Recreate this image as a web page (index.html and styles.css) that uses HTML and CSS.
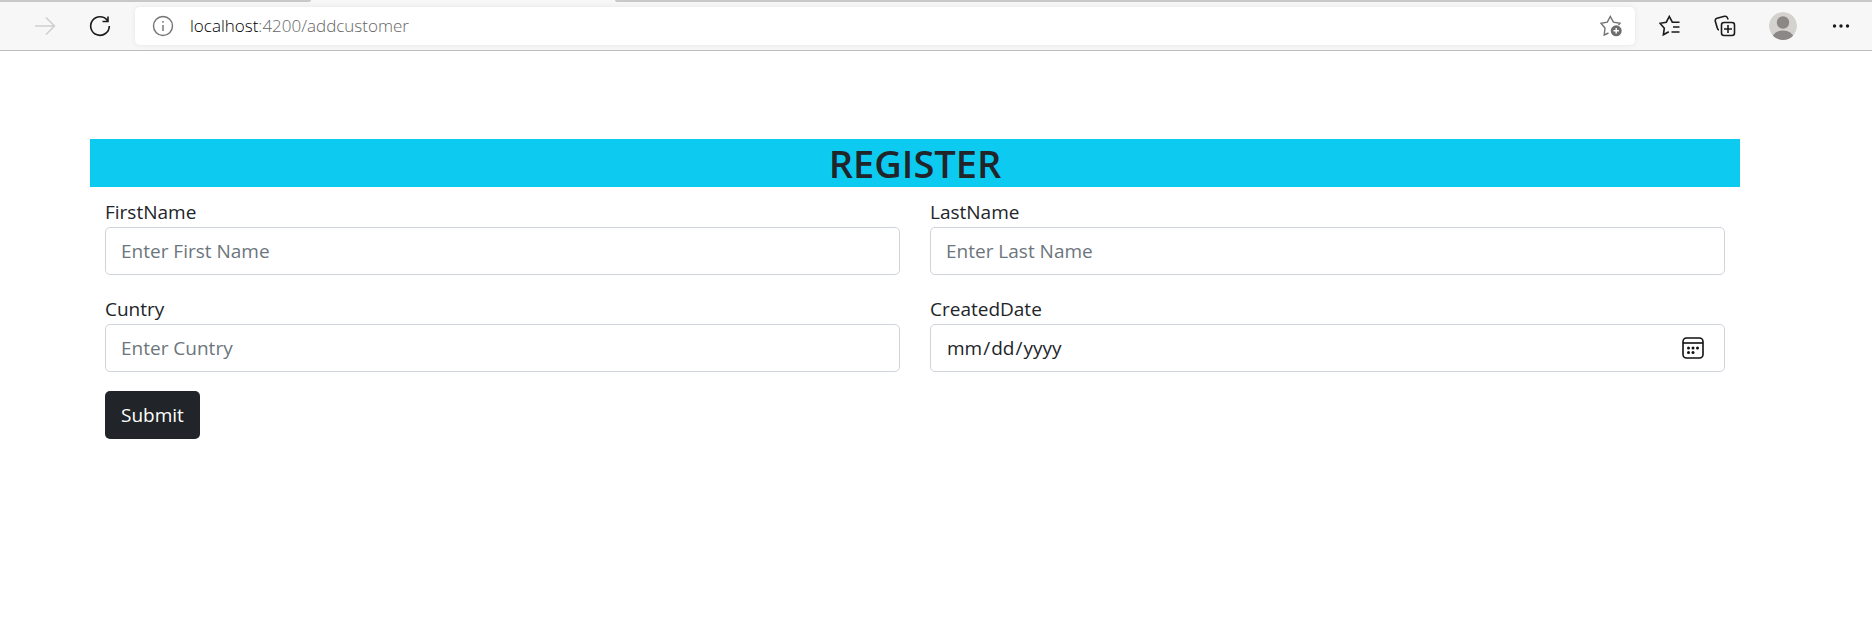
FILE: index.html
```html
<!DOCTYPE html>
<html lang="en">
<head>
<meta charset="utf-8">
<title>Register</title>
<link rel="stylesheet" href="styles.css">
</head>
<body>
<header class="browser">
  <div class="tabs"><span class="tab-rest tab-left"></span><span class="tab-active"></span><span class="tab-rest tab-right"></span></div>
  <div class="toolbar">
    <button class="tool forward" type="button" aria-label="Forward" disabled>
      <svg width="22" height="22" viewBox="0 0 22 22"><path d="M1 11H20.500M12 2.500L20.500 11L12 19.500"/></svg>
    </button>
    <button class="tool reload" type="button" aria-label="Refresh">
      <svg width="22" height="22" viewBox="0 0 22 22"><path d="M18.500 5.500A9.300 9.300 0 1 0 20.300 11M19 1.500V6.500H13.500"/></svg>
    </button>
    <div class="address">
      <svg class="info" width="22" height="22" viewBox="0 0 22 22"><circle cx="11" cy="11" r="9.500"/><path d="M11 10V16M11 6V7.800"/></svg>
      <div class="url" role="textbox" aria-label="Address" tabindex="0"><span class="host">localhost</span>:4200/addcustomer</div>
      <button class="tool add-favorite" type="button" aria-label="Add to favorites">
        <svg width="22" height="22" viewBox="0 0 22 22"><path d="M8.500 18L4.200 20L5 13L1 8.300L7.300 7.200L10.300 1.500L13.400 7.200L20 8.300L18.500 10"/><circle class="badge" cx="16.200" cy="15.800" r="5.500"/><path class="badge-plus" d="M13.500 15.800H18.900M16.200 13.100V18.500"/></svg>
      </button>
    </div>
    <button class="tool" type="button" aria-label="Favorites">
      <svg width="22" height="22" viewBox="0 0 22 22"><path d="M9.800 16.800L4.400 19.800L5.300 13.200L1 8.300L7.300 7.200L10.300 1.500L13.300 7.200H20.500M14 12H20.500M12.500 17H20.500"/></svg>
    </button>
    <button class="tool" type="button" aria-label="Collections">
      <svg width="22" height="22" viewBox="0 0 22 22"><path d="M5 15C4 15 3.500 14 3.200 12.800L1.300 6.300Q.8 4 3 3.300L10.500 1.300Q12.800.9 13.500 3L14.200 4.500"/><rect x="7.500" y="7.500" width="13" height="13" rx="2.500"/><path d="M14 10V18M10 14H18"/></svg>
    </button>
    <button class="tool profile" type="button" aria-label="Profile">
      <svg width="28" height="28" viewBox="0 0 28 28"><clipPath id="face"><circle cx="14" cy="14" r="14"/></clipPath><g clip-path="url(#face)"><circle cx="14" cy="14" r="14" fill="#d4d2ce"/><circle cx="14" cy="10.500" r="6.200" fill="#8b8785"/><ellipse cx="14" cy="25.500" rx="10.300" ry="7" fill="#8b8785"/></g></svg>
    </button>
    <button class="tool" type="button" aria-label="Settings and more">
      <svg class="dots" width="22" height="22" viewBox="0 0 22 22"><circle cx="4.500" cy="11" r="1.700"/><circle cx="11" cy="11" r="1.700"/><circle cx="17.500" cy="11" r="1.700"/></svg>
    </button>
  </div>
</header>
<main class="page">
  <h1 class="title">REGISTER</h1>
  <form class="form">
    <div class="field">
      <label for="first">FirstName</label>
      <input class="control" id="first" type="text" placeholder="Enter First Name">
    </div>
    <div class="field">
      <label for="last">LastName</label>
      <input class="control" id="last" type="text" placeholder="Enter Last Name">
    </div>
    <div class="field">
      <label for="country">Cuntry</label>
      <input class="control" id="country" type="text" placeholder="Enter Cuntry">
    </div>
    <div class="field">
      <label for="created">CreatedDate</label>
      <div class="date-box">
        <input class="control" id="created" type="date">
        <svg class="calendar" width="22" height="22" viewBox="0 0 22 22"><rect x="1" y="1" width="20" height="20" rx="3.500"/><path d="M1 6H21"/><g class="days"><circle cx="6.500" cy="11" r="1.500"/><circle cx="11" cy="11" r="1.500"/><circle cx="15.500" cy="11" r="1.500"/><circle cx="6.500" cy="15.500" r="1.500"/><circle cx="11" cy="15.500" r="1.500"/></g></svg>
      </div>
    </div>
    <button class="submit" type="submit">Submit</button>
  </form>
</main>
</body>
</html>
```
FILE: styles.css
```css
* { box-sizing: border-box; }
body {
  margin: 0;
  background: #fff;
  color: #212529;
  font: 19px/30px "Open Sans", "Noto Sans", sans-serif;
}
svg { display: block; flex: none; }
.browser {
  background: #f7f7f7;
  border-bottom: 1px solid #bdbdbd;
}
.tabs { display: flex; height: 2px; }
.tab-rest { background: #c8c8c8; }
.tab-left { width: 311px; border-bottom-right-radius: 2px; }
.tab-active { width: 304px; }
.tab-right { flex: 1; border-bottom-left-radius: 2px; }
.toolbar {
  display: flex;
  align-items: center;
  height: 48px;
  padding: 0 20px 0 34px;
}
.tool {
  display: flex;
  padding: 0;
  border: 0;
  background: none;
}
.tool svg, .info {
  fill: none;
  stroke: #1b1b1b;
  stroke-width: 1.6;
}
.forward svg { stroke: #cfcfcf; }
.forward { margin-right: 33px; }
.reload { margin-right: 24px; }
.address {
  display: flex;
  flex: 1;
  align-items: center;
  height: 38px;
  margin-right: 24px;
  padding: 0 13px 0 17px;
  border-radius: 5px;
  background: #fff;
  box-shadow: 0 0 5px #e6e6e6;
}
.address .info, .add-favorite svg { stroke: #737373; stroke-width: 1.4; }
.url {
  flex: 1;
  margin-left: 16px;
  color: #666;
  font-size: 17px;
  font-weight: 300;
}
.host { color: #000; }
.tool .badge { fill: #6e6e6e; stroke: none; }
.tool .badge-plus { stroke: #fff; }
.toolbar > .tool + .tool { margin-left: 33px; }
.toolbar > .reload.tool { margin-left: 0; }
.profile svg { stroke: none; }
.tool .dots { fill: #1b1b1b; stroke: none; }
.page { padding: 88px 132px 0 90px; }
.title {
  margin: 0;
  background: #0dcaf0;
  font-size: 38px;
  font-weight: 600;
  line-height: 48px;
  text-align: center;
}
.form {
  display: grid;
  grid-template-columns: 1fr 1fr;
  gap: 19px 30px;
  padding: 10px 15px;
}
.field { display: flex; flex-direction: column; }
.control {
  width: 100%;
  height: 48px;
  padding: 0 15px;
  border: 1px solid #ced4da;
  border-radius: 5px;
  background: #fff;
  color: #212529;
  font: inherit;
}
.control::placeholder { color: #6c757d; opacity: 1; }
.control::-webkit-calendar-picker-indicator { opacity: 0; }
.control::-webkit-datetime-edit-fields-wrapper { padding: 0; }
.date-box { position: relative; }
.calendar {
  position: absolute;
  top: 13px;
  right: 21px;
  fill: none;
  stroke: #111;
  stroke-width: 1.6;
  pointer-events: none;
}
.days { fill: #111; stroke: none; }
.submit {
  justify-self: start;
  height: 48px;
  padding: 0 16px;
  border: 0;
  border-radius: 5px;
  background: #212529;
  color: #fff;
  font: inherit;
}
```
